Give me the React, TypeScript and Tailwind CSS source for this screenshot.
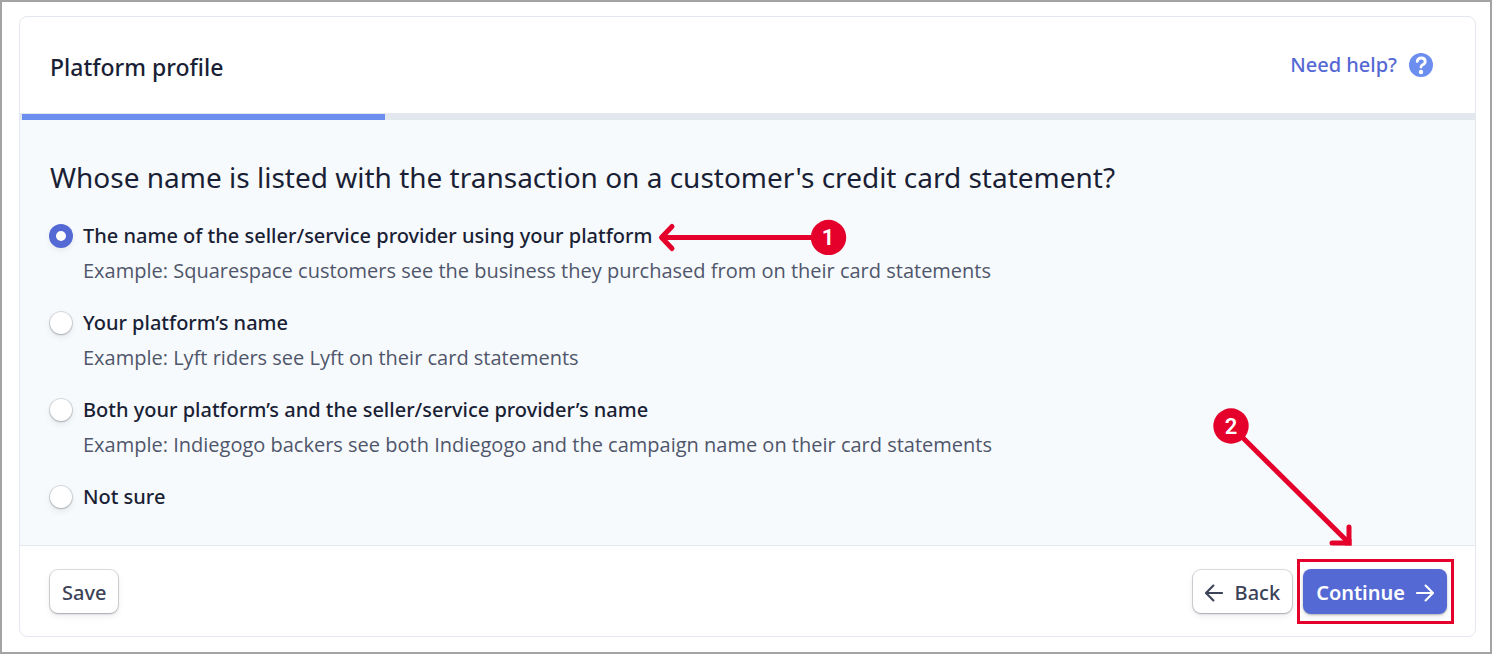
import { useState } from "react";

type Option = { id: string; label: string; example?: string };

const options: Option[] = [
  {
    id: "seller",
    label: "The name of the seller/service provider using your platform",
    example: "Example: Squarespace customers see the business they purchased from on their card statements",
  },
  {
    id: "platform",
    label: "Your platform’s name",
    example: "Example: Lyft riders see Lyft on their card statements",
  },
  {
    id: "both",
    label: "Both your platform’s and the seller/service provider’s name",
    example: "Example: Indiegogo backers see both Indiegogo and the campaign name on their card statements",
  },
  { id: "unsure", label: "Not sure" },
];

const secondaryButton =
  "flex h-[43px] items-center rounded-lg bg-white pt-1 text-xl font-medium text-[#3c4257] shadow-[0_0_0_1px_rgba(60,66,87,0.18),0_1px_2px_rgba(0,0,0,0.2),0_3px_6px_rgba(60,66,87,0.1)]";

function Arrow({ flip = false }: { flip?: boolean }) {
  return (
    <svg viewBox="0 0 18 18" className={flip ? "size-[18px] rotate-180" : "size-[18px]"} fill="none" stroke="currentColor" strokeWidth="2.1" strokeLinecap="round" strokeLinejoin="round" aria-hidden="true">
      <path d="M1 9H17M9.6 1.6 17 9 9.6 16.4" />
    </svg>
  );
}

function StepOne() {
  return (
    <svg viewBox="0 0 190 36" className="absolute top-px left-full ml-[6px] h-9 w-[190px] max-w-none" aria-hidden="true">
      <path d="M160 18.500H4" stroke="#e4002b" strokeWidth="5" />
      <path d="M14 7.500 3.500 18.500 14 29.500" fill="none" stroke="#e4002b" strokeWidth="5" strokeLinecap="round" strokeLinejoin="round" />
      <circle cx="170.5" cy="18.500" r="17.7" fill="#e4002b" />
      <text x="170" y="26" textAnchor="middle" fill="#fff" className="font-['Roboto',sans-serif] text-[22px] font-semibold">1</text>
    </svg>
  );
}

function StepTwo() {
  return (
    <svg viewBox="0 0 142 140" className="pointer-events-none absolute right-[96px] bottom-[73px] h-[140px] w-[142px]" aria-hidden="true">
      <path d="M18 18 135 134" stroke="#e4002b" strokeWidth="5" />
      <path d="M136 119V135H119" fill="none" stroke="#e4002b" strokeWidth="5" strokeLinecap="round" />
      <path d="M132 131H138.500V137.500H132Z" fill="#e4002b" />
      <circle cx="18" cy="18" r="17.7" fill="#e4002b" />
      <text x="18" y="26" textAnchor="middle" fill="#fff" className="font-['Roboto',sans-serif] text-[22px] font-semibold">2</text>
    </svg>
  );
}

export default function App() {
  const [choice, setChoice] = useState("seller");
  return (
    <main className="border-2 border-[#a3a3a3] bg-white pt-[14px] pr-[14px] pb-[15px] pl-[17px] font-['Noto_Sans',sans-serif] text-[#1a1f36]">
      <section className="overflow-hidden rounded-lg border border-[#e3e8ee]">
        <header className="flex h-24 items-center justify-between pr-[42px] pl-[30px]">
          <h1 className="pt-1 text-[23px] font-medium">Platform profile</h1>
          <a href="#help" className="flex items-center gap-3 text-xl font-medium text-[#5469d4]">
            Need help?
            <svg viewBox="0 0 24 24" className="size-6" aria-hidden="true">
              <circle cx="12" cy="12" r="12" fill="#6c8eef" />
              <path d="M8.200 8.400C8.600 6.200 10 5 12.200 5C14.600 5 16.200 6.400 16.200 8.400C16.200 10.200 15.200 11 13.700 11.800C12.500 12.400 12 12.900 12 14" fill="none" stroke="#fff" strokeWidth="2.800" strokeLinecap="round" />
              <circle cx="12" cy="19" r="2.200" fill="#fff" />
            </svg>
          </a>
        </header>
        <div className="h-[7px] bg-[#e3e8ee] pt-px pl-0.5">
          <div className="h-1.5 w-1/4 bg-[#6c8eef]" />
        </div>
        <fieldset className="bg-[#f7fafc] px-[30px] pt-9 pb-[31px]">
          <legend className="float-left w-full text-[28px] leading-[42px]">
            Whose name is listed with the transaction on a customer's credit card statement?
          </legend>
          <div className="clear-both flex flex-col gap-[17px] pt-5">
            {options.map((o) => (
              <div key={o.id} className="flex gap-[11px]">
                <input
                  id={o.id}
                  type="radio"
                  name="statement"
                  checked={choice === o.id}
                  onChange={() => setChoice(o.id)}
                  className="mt-[7px] size-[22px] shrink-0 appearance-none rounded-full bg-white shadow-[0_0_0_1px_rgba(60,66,87,0.16),0_1px_2px_rgba(0,0,0,0.18),0_3px_6px_rgba(60,66,87,0.1)] checked:border-[6px] checked:border-[#5469d4] checked:shadow-[0_0_0_1px_#5469d4,0_3px_6px_rgba(60,66,87,0.1)]"
                />
                <div>
                  <div className="relative w-fit text-xl leading-[35px] font-medium">
                    <label htmlFor={o.id}>{o.label}</label>
                    {o.id === "seller" && <StepOne />}
                  </div>
                  {o.example && <p className="font-['Open_Sans',sans-serif] text-xl leading-[35px] text-[#4f566b]">{o.example}</p>}
                </div>
              </div>
            ))}
          </div>
        </fieldset>
        <footer className="flex h-[91px] items-center justify-between border-t border-[#e3e8ee] pr-[21px] pl-[30px]">
          <button type="button" className={`${secondaryButton} px-3`}>Save</button>
          <div className="flex items-center gap-[5px]">
            <button type="button" className={`${secondaryButton} gap-3 px-3`}>
              <Arrow flip />
              Back
            </button>
            <div className="relative border-[3px] border-[#e4002b] py-[7px] pr-1 pl-[3px]">
              <button type="button" className="flex h-[45px] items-center gap-[11px] rounded-lg bg-[#5469d4] px-[13px] pt-1 text-xl font-semibold text-white shadow-[0_1px_2px_rgba(0,0,0,0.25),0_3px_6px_rgba(60,66,87,0.1)]">
                Continue
                <Arrow />
              </button>
              <StepTwo />
            </div>
          </div>
        </footer>
      </section>
    </main>
  );
}
